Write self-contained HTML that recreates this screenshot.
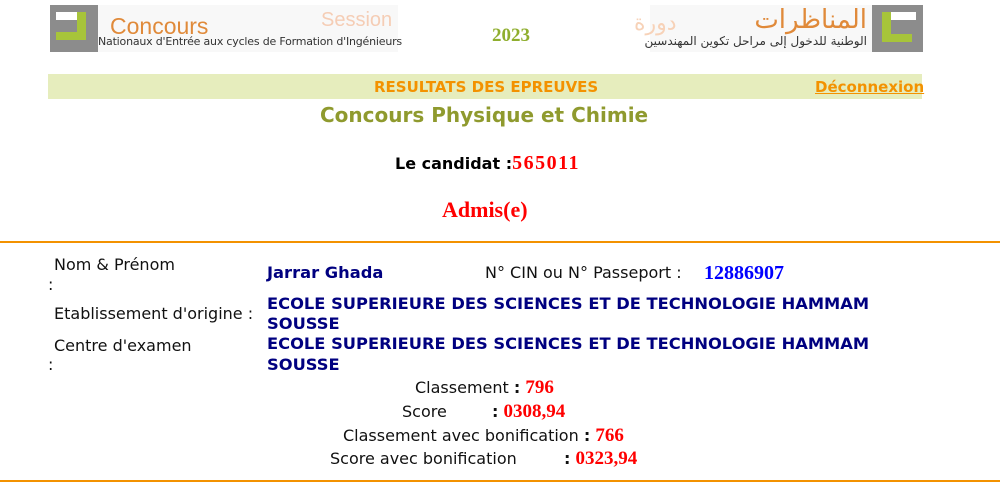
<!DOCTYPE html>
<html><head><meta charset="utf-8"><style>
body{margin:0;width:1000px;height:485px;position:relative;background:#fff;overflow:hidden;font-family:"DejaVu Sans","Liberation Sans",sans-serif;}
.a{position:absolute;white-space:nowrap;line-height:20px;}
.v{font-size:16.3px;color:#000080;font-weight:bold;}
.l{font-size:16px;color:#111;}
.r{font-family:"Liberation Serif",serif;font-weight:bold;color:#ff0000;font-size:19px;}
</style></head><body>
<!-- left logo -->
<div style="position:absolute;left:50px;top:5px;width:48px;height:47px;background:#8c8c8c"></div>
<div style="position:absolute;left:56px;top:12px;width:30px;height:8px;background:#fff"></div>
<div style="position:absolute;left:77px;top:12px;width:9px;height:28px;background:#a7c43a"></div>
<div style="position:absolute;left:56px;top:32px;width:30px;height:8px;background:#a7c43a"></div>
<div style="position:absolute;left:98px;top:5px;width:300px;height:47px;background:#f8f8f8"></div>
<div class="a" style="left:110px;top:14px;font-size:23px;color:#e08a3a;line-height:24px;font-family:'Liberation Sans',sans-serif">Concours</div>
<div class="a" style="left:98px;top:35px;font-size:11px;color:#333;line-height:14px;letter-spacing:-0.2px">Nationaux d'Entrée aux cycles de Formation d'Ingénieurs</div>
<div class="a" style="left:321px;top:9px;font-size:20px;color:#f5cdb5;line-height:22px;font-family:'Liberation Sans',sans-serif">Session</div>
<div class="a" style="left:492px;top:26px;font-family:'Liberation Serif',serif;font-weight:bold;font-size:19px;color:#8fae2e">2023</div>
<!-- right logo -->
<div style="position:absolute;left:650px;top:5px;width:222px;height:47px;background:#f8f8f8"></div>
<div class="a" style="left:634px;top:12px;font-size:22px;color:#f7d2b8;line-height:24px">دورة</div>
<div class="a" style="right:133px;top:5px;font-size:26px;color:#e08a3a;line-height:30px">المناظرات</div>
<div class="a" style="right:133px;top:33px;font-size:12px;color:#333;line-height:16px">الوطنية للدخول إلى مراحل تكوين المهندسين</div>
<div style="position:absolute;left:872px;top:5px;width:51px;height:47px;background:#8c8c8c"></div>
<div style="position:absolute;left:882px;top:12px;width:34px;height:8px;background:#fff"></div>
<div style="position:absolute;left:882px;top:12px;width:9px;height:30px;background:#a7c43a"></div>
<div style="position:absolute;left:882px;top:34px;width:30px;height:8px;background:#a7c43a"></div>
<!-- band -->
<div style="position:absolute;left:48px;top:74px;width:874px;height:25px;background:#e6edbd"></div>
<div class="a" style="left:374px;top:77px;font-size:15px;font-weight:bold;color:#f39200">RESULTATS DES EPREUVES</div>
<div class="a" style="left:815px;top:77px;font-size:15px;font-weight:bold;color:#f39200;text-decoration:underline">Déconnexion</div>
<div class="a" style="left:320px;top:104px;font-size:20px;font-weight:bold;color:#8f9a2e;line-height:22px">Concours Physique et Chimie</div>
<div class="a" style="left:395px;top:153px;font-size:16px;font-weight:bold;color:#000">Le candidat :<span class="r" style="font-size:20px;letter-spacing:1.5px">565011</span></div>
<div class="a r" style="left:442px;top:198px;font-size:22px;line-height:24px">Admis(e)</div>
<div style="position:absolute;left:0;top:241px;width:1000px;height:2px;background:#f39200"></div>
<div class="a l" style="left:54px;top:255px">Nom &amp; Prénom</div>
<div class="a l" style="left:48px;top:275px">:</div>
<div class="a v" style="left:267px;top:263px">Jarrar Ghada</div>
<div class="a l" style="left:485px;top:263px">N° CIN ou N° Passeport :</div>
<div class="a" style="left:704px;top:263px;font-family:'Liberation Serif',serif;font-weight:bold;font-size:20px;color:#0000ff">12886907</div>
<div class="a l" style="left:54px;top:304px">Etablissement d'origine :</div>
<div class="a v" style="left:267px;top:294px">ECOLE SUPERIEURE DES SCIENCES ET DE TECHNOLOGIE HAMMAM</div>
<div class="a v" style="left:267px;top:314px">SOUSSE</div>
<div class="a l" style="left:54px;top:336px">Centre d'examen</div>
<div class="a l" style="left:48px;top:355px">:</div>
<div class="a v" style="left:267px;top:334px">ECOLE SUPERIEURE DES SCIENCES ET DE TECHNOLOGIE HAMMAM</div>
<div class="a v" style="left:267px;top:355px">SOUSSE</div>
<div class="a l" style="left:415px;top:378px">Classement <b>:</b> <span class="r">796</span></div>
<div class="a l" style="left:402px;top:402px">Score</div>
<div class="a l" style="left:492px;top:402px"><b>:</b> <span class="r">0308,94</span></div>
<div class="a l" style="left:343px;top:426px">Classement avec bonification <b>:</b> <span class="r">766</span></div>
<div class="a l" style="left:330px;top:449px">Score avec bonification</div>
<div class="a l" style="left:564px;top:449px"><b>:</b> <span class="r">0323,94</span></div>
<div style="position:absolute;left:0;top:480px;width:1000px;height:2px;background:#f39200"></div>
</body></html>
